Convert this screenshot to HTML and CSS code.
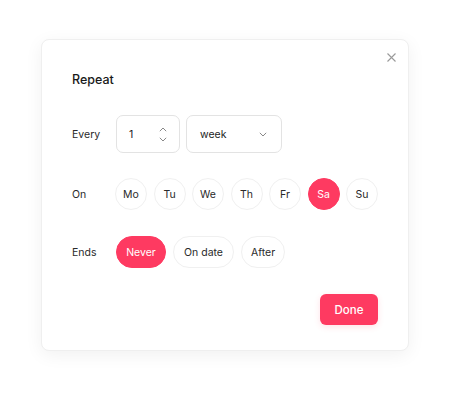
FILE: index.html
```html
<!DOCTYPE html>
<html>
<head>
<meta charset="utf-8">
<link rel="stylesheet" href="styles.css">
</head>
<body>
<div class="card">
  <button class="close" aria-label="Close">
    <svg width="9" height="9" viewBox="0 0 9 9"><path d="M0.5 0.5L8.5 8.5M8.5 0.5L0.5 8.5" stroke="#9a9a9a" stroke-width="1.1" fill="none"/></svg>
  </button>
  <h1 class="title">Repeat</h1>
  <div class="row row-every">
    <span class="label">Every</span>
    <div class="field num">
      <span>1</span>
      <span class="spin">
        <svg width="8" height="5" viewBox="0 0 8 5"><path d="M0.8 4.2L4 1L7.2 4.2" stroke="#888" stroke-width="1" fill="none"/></svg>
        <svg width="8" height="5" viewBox="0 0 8 5"><path d="M0.8 0.8L4 4L7.2 0.8" stroke="#888" stroke-width="1" fill="none"/></svg>
      </span>
    </div>
    <div class="field sel">
      <span>week</span>
      <svg width="8" height="5" viewBox="0 0 8 5"><path d="M0.8 0.8L4 4L7.2 0.8" stroke="#888" stroke-width="1" fill="none"/></svg>
    </div>
  </div>
  <div class="row">
    <span class="label">On</span>
    <div class="days">
      <span class="day">Mo</span>
      <span class="day">Tu</span>
      <span class="day">We</span>
      <span class="day">Th</span>
      <span class="day">Fr</span>
      <span class="day active">Sa</span>
      <span class="day">Su</span>
    </div>
  </div>
  <div class="row row-ends">
    <span class="label">Ends</span>
    <div class="pills">
      <span class="pill pill-never active">Never</span>
      <span class="pill pill-date">On date</span>
      <span class="pill pill-after">After</span>
    </div>
  </div>
  <div class="footer">
    <button class="done">Done</button>
  </div>
</div>
</body>
</html>
```
FILE: styles.css
```css
* { box-sizing: border-box; }
html, body { margin: 0; padding: 0; background: #fff; }
body {
  font-family: Inter, "Noto Sans", sans-serif;
  color: #1f1f1f;
  width: 450px;
  height: 393px;
  overflow: hidden;
}
.card {
  position: relative;
  margin: 39px 0 0 41px;
  width: 368px;
  height: 312px;
  border: 1px solid #efefef;
  border-radius: 8px;
  background: #fff;
  box-shadow: 0 4px 18px rgba(0,0,0,0.06);
  padding: 32px 30px 0 30px;
  display: flex;
  flex-direction: column;
}
.close {
  position: absolute;
  top: 11px;
  right: 11px;
  width: 12px;
  height: 12px;
  padding: 0;
  border: 0;
  background: none;
  display: flex;
  align-items: center;
  justify-content: center;
}
.title {
  margin: 0;
  font-size: 12.5px;
  line-height: 16px;
  font-weight: 500;
  color: #1a1a1a;
}
.row {
  display: flex;
  align-items: center;
  margin-top: 25px;
}
.row-every { margin-top: 27px; }
.row-ends { margin-top: 26px; }
.label {
  width: 44px;
  font-size: 10.5px;
  color: #2a2a2a;
}
.field {
  height: 38px;
  border: 1px solid #e3e3e3;
  border-radius: 7px;
  display: flex;
  align-items: center;
  justify-content: space-between;
  font-size: 10.5px;
  color: #222;
}
.num { width: 64px; padding: 0 12px 0 12px; }
.sel { width: 96px; margin-left: 6px; padding: 0 14px 0 13px; }
.spin {
  display: flex;
  flex-direction: column;
  gap: 5px;
}
.days { display: flex; gap: 6.5px; }
.day {
  width: 32px;
  height: 32px;
  border-radius: 50%;
  border: 1px solid #f0f0f0;
  display: flex;
  align-items: center;
  justify-content: center;
  font-size: 10.5px;
  color: #2a2a2a;
}
.day.active, .pill.active {
  background: #fe3a61;
  border-color: #fe3a61;
  color: #fff;
}
.pills { display: flex; gap: 7px; }
.pill {
  height: 32px;
  border-radius: 16px;
  border: 1px solid #f0f0f0;
  display: flex;
  align-items: center;
  justify-content: center;
  font-size: 10.5px;
  color: #2a2a2a;
}
.pill-never { width: 50px; }
.pill-date { width: 61px; }
.pill-after { width: 44px; }
.footer {
  margin-top: 26px;
  display: flex;
  justify-content: flex-end;
}
.done {
  width: 58px;
  height: 31px;
  border: 0;
  border-radius: 6px;
  background: #fe3a61;
  color: #fff;
  font-family: inherit;
  font-size: 11.5px;
  font-weight: 500;
  box-shadow: 0 2px 6px rgba(254,58,97,0.15);
}
```
